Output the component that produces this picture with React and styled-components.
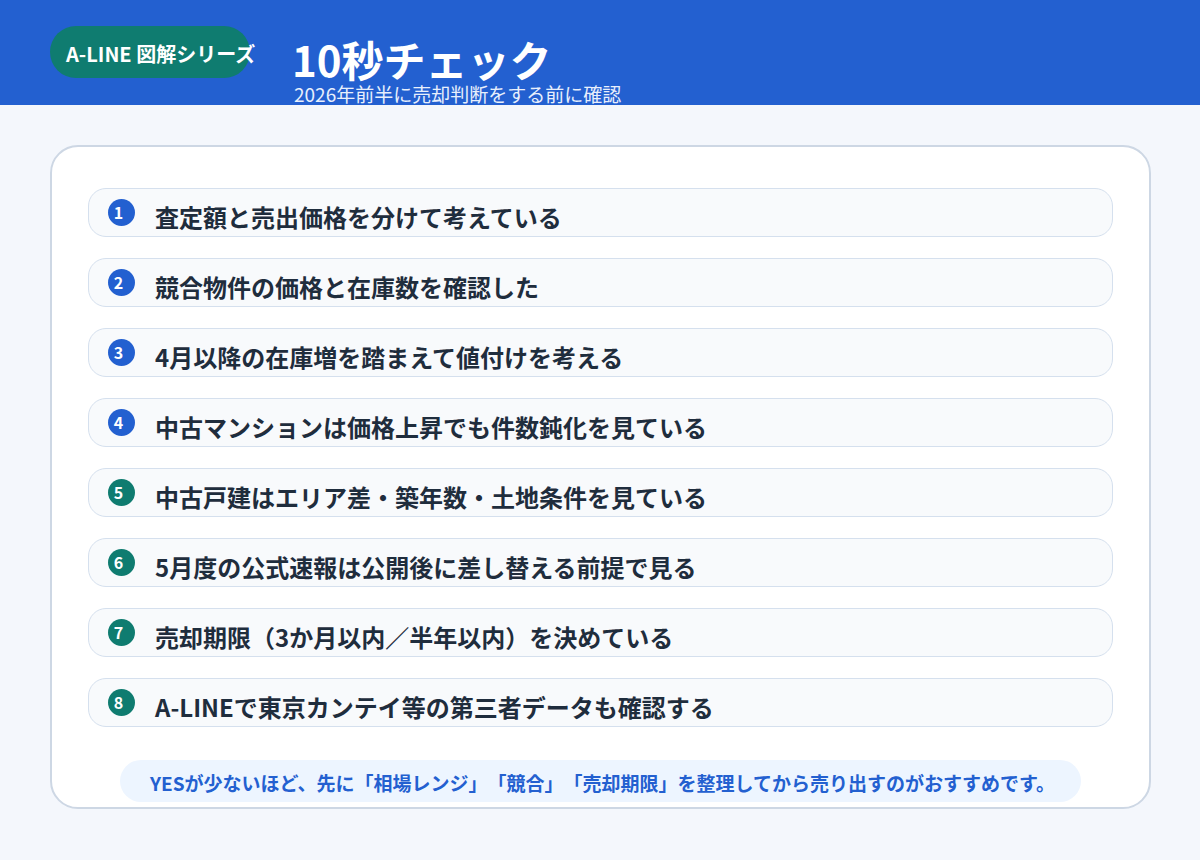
import React from "react";
import styled, { createGlobalStyle } from "styled-components";

const Global = createGlobalStyle`
  html, body { margin: 0; padding: 0; }
  body {
    background: #f4f7fc;
    font-family: "Noto Sans CJK JP", "Noto Sans", sans-serif;
    text-spacing-trim: space-all;
  }
  * { box-sizing: border-box; }
`;

const Page = styled.div`
  width: 1200px;
  height: 860px;
  overflow: hidden;
  background: #f4f7fc;
`;

const Header = styled.header`
  height: 105px;
  background: #2360d0;
  display: flex;
  align-items: flex-start;
  padding: 26px 0 0 50px;
  color: #fff;
`;

const Pill = styled.div`
  width: 200px;
  height: 52px;
  border-radius: 26px;
  background: #0f7c70;
  padding: 0 16px;
  font-size: 20px;
  font-weight: 700;
  line-height: 56px;
  white-space: nowrap;
`;

const TitleBlock = styled.div`
  margin-left: 42px;
  padding-top: 12px;
`;

const Title = styled.h1`
  margin: 0;
  font-size: 42px;
  font-weight: 700;
  line-height: 42px;
  white-space: nowrap;
`;

const Sub = styled.div`
  margin: 4px 0 0 2px;
  font-size: 19px;
  line-height: 20px;
  color: #e8effc;
  white-space: nowrap;
`;

const Card = styled.main`
  margin: 40px 49px 0 50px;
  height: 664px;
  background: #fff;
  border: 2px solid #cdd7e4;
  border-radius: 28px;
  padding: 41px 36px 0;
`;

const List = styled.ol`
  list-style: none;
  margin: 0;
  padding: 0;
  display: flex;
  flex-direction: column;
  gap: 21px;
`;

const Row = styled.li`
  height: 49px;
  display: flex;
  align-items: flex-start;
  background: #f8fafc;
  border: 1px solid #d5e0ee;
  border-radius: 18px;
  padding: 10px 0 0 19px;
`;

const Badge = styled.span`
  width: 27px;
  height: 27px;
  flex: none;
  border-radius: 50%;
  background: ${(p) => p.$color};
  color: #fff;
  font-size: 16px;
  font-weight: 700;
  line-height: 27px;
  padding-right: 6px;
  text-align: center;
`;

const RowText = styled.span`
  margin-left: 20px;
  font-size: 24px;
  font-weight: 700;
  line-height: 36px;
  color: #1f2d3d;
  white-space: nowrap;
`;

const Note = styled.div`
  margin: 33px 32px 0 32px;
  padding-left: 4px;
  height: 42px;
  border-radius: 21px;
  background: #edf5ff;
  color: #2360d0;
  font-size: 19px;
  font-weight: 700;
  line-height: 46px;
  text-align: center;
  white-space: nowrap;
`;

const BLUE = "#2360d0";
const GREEN = "#0f7c70";

const items = [
  ["査定額と売出価格を分けて考えている", BLUE],
  ["競合物件の価格と在庫数を確認した", BLUE],
  ["4月以降の在庫増を踏まえて値付けを考える", BLUE],
  ["中古マンションは価格上昇でも件数鈍化を見ている", BLUE],
  ["中古戸建はエリア差・築年数・土地条件を見ている", GREEN],
  ["5月度の公式速報は公開後に差し替える前提で見る", GREEN],
  ["売却期限（3か月以内／半年以内）を決めている", GREEN],
  ["A-LINEで東京カンテイ等の第三者データも確認する", GREEN],
];

export default function App() {
  return (
    <Page>
      <Global />
      <Header>
        <Pill>A-LINE 図解シリーズ</Pill>
        <TitleBlock>
          <Title>10秒チェック</Title>
          <Sub>2026年前半に売却判断をする前に確認</Sub>
        </TitleBlock>
      </Header>
      <Card>
        <List>
          {items.map(([text, color], i) => (
            <Row key={text}>
              <Badge $color={color}>{i + 1}</Badge>
              <RowText>{text}</RowText>
            </Row>
          ))}
        </List>
        <Note>YESが少ないほど、先に「相場レンジ」「競合」「売却期限」を整理してから売り出すのがおすすめです。</Note>
      </Card>
    </Page>
  );
}
